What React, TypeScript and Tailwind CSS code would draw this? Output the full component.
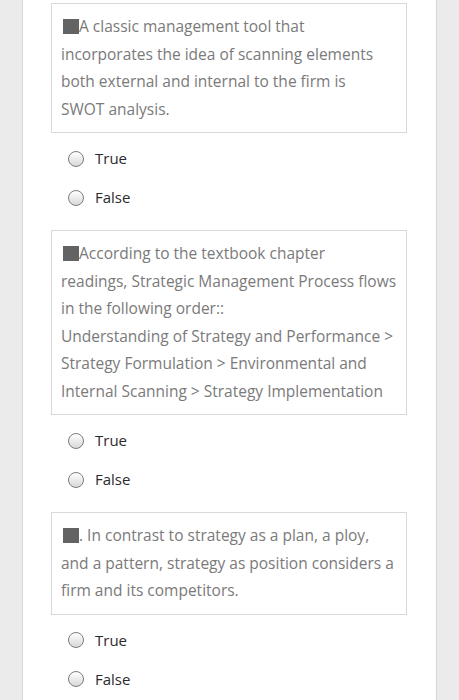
import React from 'react';

interface Question {
  id: number;
  lines: string[];
}

// lines broken as they wrap in the box
const QUESTIONS: Question[] = [
  {
    id: 1,
    lines: [
      'A classic management tool that',
      'incorporates the idea of scanning elements',
      'both external and internal to the firm is',
      'SWOT analysis.',
    ],
  },
  {
    id: 2,
    lines: [
      'According to the textbook chapter',
      'readings, Strategic Management Process flows',
      'in the following order::',
      'Understanding of Strategy and Performance >',
      'Strategy Formulation > Environmental and',
      'Internal Scanning > Strategy Implementation',
    ],
  },
  {
    id: 3,
    lines: [
      '. In contrast to strategy as a plan, a ploy,',
      'and a pattern, strategy as position considers a',
      'firm and its competitors.',
    ],
  },
];

function Radio({ label }: { label: string }) {
  return (
    <label className="flex h-[39px] items-center">
      <span className="h-4 w-4 rounded-full border border-[#7d7d7d] bg-gradient-to-b from-white to-[#d8d8d8]" />
      <span className="ml-[11px] text-[15px] text-[#2b2b2b]">{label}</span>
    </label>
  );
}

export default function App() {
  return (
    <div className="min-h-[700px] bg-[#ebebeb] px-[22px] font-['Open_Sans',sans-serif]">
      <div className="min-h-[700px] border-x border-[#d6d6d6] bg-white pl-[28px] pt-[3px]">
        {QUESTIONS.map(q => (
          <div key={q.id}>
            <div className="w-[356px] border border-[#d9d9d9] px-[9px] py-[9px] text-[15.5px] leading-[27.5px] text-[#7a7a7a]">
              {q.lines.map((line, i) => (
                <div key={i} className="whitespace-nowrap">
                  {i === 0 && (
                    <span className="ml-[2px] inline-block h-[15px] w-[16px] bg-[#636363] align-[-2px]" />
                  )}
                  {line}
                </div>
              ))}
            </div>
            <div className="mt-[6px] mb-[13px] pl-[17px]">
              <Radio label="True" />
              <Radio label="False" />
            </div>
          </div>
        ))}
      </div>
    </div>
  );
}
